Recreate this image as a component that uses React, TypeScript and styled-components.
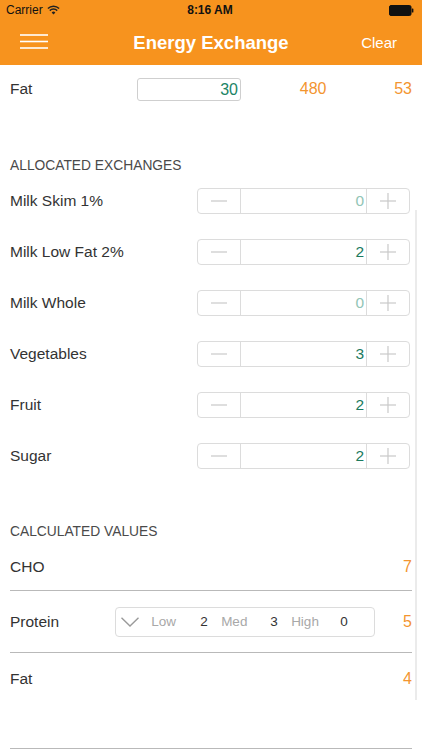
import styled, { createGlobalStyle } from "styled-components"

const GlobalStyle = createGlobalStyle`
  * { box-sizing: border-box; }
  body {
    margin: 0;
    background: #fff;
    font-family: "Liberation Sans", Arial, sans-serif;
    -webkit-font-smoothing: antialiased;
  }
`

type Exchange = { name: string; value: number }

const exchanges: Exchange[] = [
  { name: "Milk Skim 1%", value: 0 },
  { name: "Milk Low Fat 2%", value: 2 },
  { name: "Milk Whole", value: 0 },
  { name: "Vegetables", value: 3 },
  { name: "Fruit", value: 2 },
  { name: "Sugar", value: 2 },
]

const proteinLevels = [
  { label: "Low", value: 2 },
  { label: "Med", value: 3 },
  { label: "High", value: 0 },
]

const WifiIcon = () => (
  <svg width="13" height="10" viewBox="0 0 13 10">
    <path d="M6.5 9.6 L4.6 7.4 A2.8 2.8 0 0 1 8.4 7.4 Z" fill="#222" />
    <path d="M2.8 5.6 A5.3 5.3 0 0 1 10.2 5.6" stroke="#222" strokeWidth="1.5" fill="none" />
    <path d="M0.9 3.5 A8 8 0 0 1 12.1 3.5" stroke="#222" strokeWidth="1.5" fill="none" />
  </svg>
)

const BatteryIcon = () => (
  <svg width="25" height="11" viewBox="0 0 25 11">
    <rect x="0.5" y="0.5" width="21.5" height="10" rx="1.5" fill="#111" stroke="#111" />
    <rect x="22.8" y="3.5" width="1.6" height="4" rx="0.6" fill="#111" />
  </svg>
)

const MenuIcon = () => (
  <svg width="28" height="16" viewBox="0 0 28 16">
    <g stroke="#fff" strokeWidth="1.6">
      <line x1="0" y1="1" x2="28" y2="1" />
      <line x1="0" y1="7.5" x2="28" y2="7.5" />
      <line x1="0" y1="14" x2="28" y2="14" />
    </g>
  </svg>
)

const MinusIcon = () => (
  <svg width="16" height="16" viewBox="0 0 16 16">
    <line x1="0" y1="8" x2="16" y2="8" stroke="#c9c9c9" strokeWidth="1.2" />
  </svg>
)

const PlusIcon = () => (
  <svg width="16" height="16" viewBox="0 0 16 16">
    <g stroke="#c9c9c9" strokeWidth="1.2">
      <line x1="0" y1="8" x2="16" y2="8" />
      <line x1="8" y1="0" x2="8" y2="16" />
    </g>
  </svg>
)

const ChevronIcon = () => (
  <svg width="18" height="10" viewBox="0 0 18 10">
    <polyline points="0.5,0.8 9,9 17.5,0.8" fill="none" stroke="#9a9a9a" strokeWidth="1.4" />
  </svg>
)

export default function App() {
  return (
    <>
      <GlobalStyle />
      <Screen>
        <StatusBar>
          <Carrier>
            Carrier <WifiIcon />
          </Carrier>
          <Clock>8:16 AM</Clock>
          <Battery>
            <BatteryIcon />
          </Battery>
        </StatusBar>

        <NavBar>
          <MenuButton>
            <MenuIcon />
          </MenuButton>
          <Title>Energy Exchange</Title>
          <NavAction>Clear</NavAction>
        </NavBar>

        <Content>
          <FatRow>
            <Label>Fat</Label>
            <FatInput>30</FatInput>
            <OrangeCell>480</OrangeCell>
            <OrangeCell>53</OrangeCell>
          </FatRow>

          <SectionTitle $top={44} $bottom={-1}>
            ALLOCATED EXCHANGES
          </SectionTitle>
          {exchanges.map((item) => (
            <ExchangeRow key={item.name}>
              <Label>{item.name}</Label>
              <Stepper>
                <StepButton $side="left">
                  <MinusIcon />
                </StepButton>
                <StepValue $zero={item.value === 0}>{item.value}</StepValue>
                <StepButton $side="right">
                  <PlusIcon />
                </StepButton>
              </Stepper>
            </ExchangeRow>
          ))}

          <SectionTitle $top={41} $bottom={2}>
            CALCULATED VALUES
          </SectionTitle>
          <CalcRow $h={46} $line>
            <Label>CHO</Label>
            <CalcValue>7</CalcValue>
          </CalcRow>
          <CalcRow $h={61} $line>
            <Label>Protein</Label>
            <LevelSelect>
              <ChevronBox>
                <ChevronIcon />
              </ChevronBox>
              {proteinLevels.map((lvl) => (
                <Level key={lvl.label}>
                  <LevelLabel>{lvl.label}</LevelLabel>
                  <LevelValue>{lvl.value}</LevelValue>
                </Level>
              ))}
            </LevelSelect>
            <CalcValue>5</CalcValue>
          </CalcRow>
          <CalcRow $h={52}>
            <Label>Fat</Label>
            <CalcValue>4</CalcValue>
          </CalcRow>
          <CalcRow $h={43} $line />
        </Content>

        <ScrollIndicator />
      </Screen>
    </>
  )
}

const Screen = styled.div`
  position: relative;
  width: 422px;
  height: 750px;
  overflow: hidden;
  background: #fff;
`

const StatusBar = styled.div`
  height: 20px;
  background: #f7931e;
  display: grid;
  grid-template-columns: 1fr auto 1fr;
  align-items: center;
  padding: 0 8px 0 6px;
  font-size: 12px;
  color: #111;
`

const Carrier = styled.div`
  display: flex;
  align-items: center;
  gap: 4px;
`

const Clock = styled.div`
  font-weight: bold;
`

const Battery = styled.div`
  display: flex;
  justify-content: flex-end;
`

const NavBar = styled.div`
  height: 45px;
  background: #f7931e;
  display: flex;
  align-items: center;
  position: relative;
  padding: 0 25px 0 20px;
`

const MenuButton = styled.div`
  display: flex;
  align-items: center;
  padding-bottom: 2px;
`

const Title = styled.div`
  position: absolute;
  left: 0;
  right: 0;
  text-align: center;
  color: #fff;
  font-size: 18.5px;
  font-weight: bold;
  pointer-events: none;
`

const NavAction = styled.div`
  margin-left: auto;
  color: #fff;
  font-size: 15px;
`

const Content = styled.div`
  padding: 1px 10px 0;
`

const Label = styled.div`
  font-size: 15.5px;
  color: #333;
`

const FatRow = styled.div`
  height: 46px;
  display: flex;
  align-items: center;
  ${Label} {
    width: 127px;
  }
`

const FatInput = styled.div`
  width: 104px;
  height: 23px;
  border: 1px solid #cfcfcf;
  border-radius: 3px;
  text-align: right;
  padding-right: 2px;
  font-size: 16px;
  line-height: 21px;
  color: #1b8466;
`

const OrangeCell = styled.div`
  width: 85.5px;
  text-align: right;
  font-size: 16px;
  color: #f39530;
`

const SectionTitle = styled.div<{ $top: number; $bottom?: number }>`
  margin-top: ${(p) => p.$top}px;
  margin-bottom: ${(p) => p.$bottom ?? 0}px;
  font-size: 13.8px;
  line-height: 20px;
  color: #4a4a4a;
`

const ExchangeRow = styled.div`
  height: 51px;
  display: flex;
  align-items: center;
  justify-content: space-between;
`

const Stepper = styled.div`
  width: 213px;
  height: 26px;
  margin-right: 2px;
  border: 1px solid #dcdcdc;
  border-radius: 4px;
  display: flex;
`

const StepButton = styled.div<{ $side: "left" | "right" }>`
  width: 43px;
  display: flex;
  align-items: center;
  justify-content: center;
  ${(p) => (p.$side === "left" ? "border-right" : "border-left")}: 1px solid #dcdcdc;
`

const StepValue = styled.div<{ $zero: boolean }>`
  flex: 1;
  text-align: right;
  padding-right: 2px;
  font-size: 15.5px;
  line-height: 24px;
  color: ${(p) => (p.$zero ? "#92c5b6" : "#1b7a5e")};
`

const CalcRow = styled.div<{ $h: number; $line?: boolean }>`
  height: ${(p) => p.$h}px;
  display: flex;
  align-items: center;
  border-bottom: ${(p) => (p.$line ? "1px solid #b9b9b9" : "none")};
  box-sizing: content-box;
`

const CalcValue = styled.div`
  margin-left: auto;
  font-size: 16px;
  color: #f39530;
`

const LevelSelect = styled.div`
  margin-left: 56px;
  width: 260px;
  height: 30px;
  border: 1px solid #dcdcdc;
  border-radius: 4px;
  display: flex;
  align-items: center;
  padding-left: 5px;
`

const ChevronBox = styled.div`
  width: 30px;
  display: flex;
  align-items: center;
  padding-top: 1px;
`

const Level = styled.div`
  width: 70px;
  display: flex;
  font-size: 13.5px;
`

const LevelLabel = styled.span`
  width: 49px;
  color: #a8a8a8;
`

const LevelValue = styled.span`
  color: #333;
`

const ScrollIndicator = styled.div`
  position: absolute;
  right: 5px;
  top: 210px;
  width: 2px;
  height: 490px;
  background: #ebebeb;
`
